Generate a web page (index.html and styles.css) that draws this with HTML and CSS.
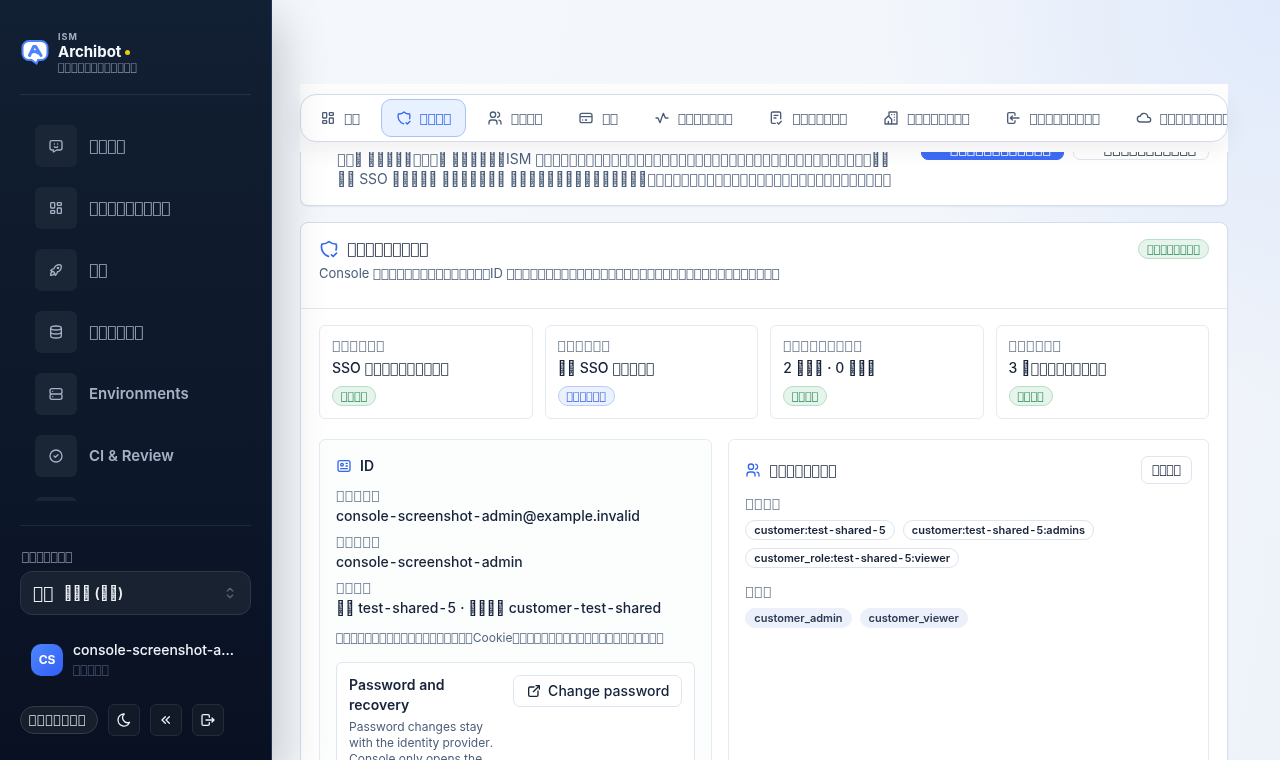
FILE: index.html
```html
<!DOCTYPE html>
<html lang="ja">
<head>
<meta charset="utf-8">
<title>ISM Archibot</title>
<link rel="stylesheet" href="styles.css">
</head>
<body>
<svg class="sprite" aria-hidden="true">
<symbol id="chat" viewBox="0 0 24 24"><path d="M18 4a3 3 0 0 1 3 3v8a3 3 0 0 1-3 3h-5l-5 3v-3H6a3 3 0 0 1-3-3V7a3 3 0 0 1 3-3zM9.500 9h.01M14.500 9h.01M9.500 13a3.500 3.500 0 0 0 5 0"/></symbol>
<symbol id="dash" viewBox="0 0 24 24"><path d="M5 4h4a1 1 0 0 1 1 1v6a1 1 0 0 1-1 1H5a1 1 0 0 1-1-1V5a1 1 0 0 1 1-1M5 16h4a1 1 0 0 1 1 1v2a1 1 0 0 1-1 1H5a1 1 0 0 1-1-1v-2a1 1 0 0 1 1-1M15 12h4a1 1 0 0 1 1 1v6a1 1 0 0 1-1 1h-4a1 1 0 0 1-1-1v-6a1 1 0 0 1 1-1M15 4h4a1 1 0 0 1 1 1v2a1 1 0 0 1-1 1h-4a1 1 0 0 1-1-1V5a1 1 0 0 1 1-1"/></symbol>
<symbol id="rocket" viewBox="0 0 24 24"><path d="M4 13a8 8 0 0 1 7 7a6 6 0 0 0 3-5a9 9 0 0 0 6-8a3 3 0 0 0-3-3a9 9 0 0 0-8 6a6 6 0 0 0-5 3M7 14a6 6 0 0 0-3 6a6 6 0 0 0 6-3M14 9a1 1 0 1 0 2 0a1 1 0 1 0-2 0"/></symbol>
<symbol id="db" viewBox="0 0 24 24"><path d="M4 6a8 3 0 1 0 16 0a8 3 0 1 0-16 0M4 6v6a8 3 0 0 0 16 0V6M4 12v6a8 3 0 0 0 16 0v-6"/></symbol>
<symbol id="server" viewBox="0 0 24 24"><path d="M3 7a3 3 0 0 1 3-3h12a3 3 0 0 1 3 3v2a3 3 0 0 1-3 3H6a3 3 0 0 1-3-3zM3 15a3 3 0 0 1 3-3h12a3 3 0 0 1 3 3v2a3 3 0 0 1-3 3H6a3 3 0 0 1-3-3zM7 8v.01M7 16v.01"/></symbol>
<symbol id="check" viewBox="0 0 24 24"><path d="M3 12a9 9 0 1 0 18 0a9 9 0 1 0-18 0M9 12l2 2l4-4"/></symbol>
<symbol id="shield" viewBox="0 0 24 24"><path d="M11.460 20.846A12 12 0 0 1 3.500 6A12 12 0 0 0 12 3a12 12 0 0 0 8.500 3a12 12 0 0 1-.09 7.060M15 19l2 2l4-4"/></symbol>
<symbol id="users" viewBox="0 0 24 24"><path d="M5 7a4 4 0 1 0 8 0a4 4 0 1 0-8 0M3 21v-2a4 4 0 0 1 4-4h4a4 4 0 0 1 4 4v2M16 3.130a4 4 0 0 1 0 7.750M21 21v-2a4 4 0 0 0-3-3.850"/></symbol>
<symbol id="card" viewBox="0 0 24 24"><path d="M3 8a3 3 0 0 1 3-3h12a3 3 0 0 1 3 3v8a3 3 0 0 1-3 3H6a3 3 0 0 1-3-3zM3 10h18M7 15h.01M11 15h2"/></symbol>
<symbol id="pulse" viewBox="0 0 24 24"><path d="M3 12h3l3 7l5-14l3 7h4"/></symbol>
<symbol id="note" viewBox="0 0 24 24"><path d="M11 20H7a2 2 0 0 1-2-2V5a2 2 0 0 1 2-2h10a2 2 0 0 1 2 2v8M9 8h6M9 12h3M14 19l2 2l4-4"/></symbol>
<symbol id="estate" viewBox="0 0 24 24"><path d="M8 9l5 5v7H8v-4v4H3v-7l5-5M9 10V4a1 1 0 0 1 1-1h10a1 1 0 0 1 1 1v17h-8M13 7v.01M17 7v.01M17 11v.01M17 15v.01"/></symbol>
<symbol id="enter" viewBox="0 0 24 24"><path d="M15 8V6a2 2 0 0 0-2-2H6a2 2 0 0 0-2 2v12a2 2 0 0 0 2 2h7a2 2 0 0 0 2-2v-2M21 12H8l3-3M11 15l-3-3"/></symbol>
<symbol id="cloud" viewBox="0 0 24 24"><path d="M6.657 18C4.085 18 2 15.993 2 13.517s2.085-4.482 4.657-4.482c.393-1.762 1.794-3.200 3.675-3.773c1.880-.572 3.956-.193 5.444 1c1.488 1.190 2.162 3.007 1.770 4.769h.990c1.913 0 3.464 1.560 3.464 3.486S20.449 18 18.535 18z"/></symbol>
<symbol id="id" viewBox="0 0 24 24"><path d="M3 7a3 3 0 0 1 3-3h12a3 3 0 0 1 3 3v10a3 3 0 0 1-3 3H6a3 3 0 0 1-3-3zM7 10a2 2 0 1 0 4 0a2 2 0 1 0-4 0M15 8h2M15 12h2M7 16h10"/></symbol>
<symbol id="ext" viewBox="0 0 24 24"><path d="M12 6H6a2 2 0 0 0-2 2v10a2 2 0 0 0 2 2h10a2 2 0 0 0 2-2v-6M11 13l9-9M15 4h5v5"/></symbol>
<symbol id="moon" viewBox="0 0 24 24"><path d="M12 3h.393a7.500 7.500 0 0 0 7.920 12.446A9 9 0 1 1 12 2.992z"/></symbol>
<symbol id="back" viewBox="0 0 24 24"><path d="M11 7l-5 5l5 5M17 7l-5 5l5 5"/></symbol>
<symbol id="exit" viewBox="0 0 24 24"><path d="M14 8V6a2 2 0 0 0-2-2H5a2 2 0 0 0-2 2v12a2 2 0 0 0 2 2h7a2 2 0 0 0 2-2v-2M9 12h12l-3-3M18 15l3-3"/></symbol>
<symbol id="updown" viewBox="0 0 24 24"><path d="M8 9l4-4l4 4M16 15l-4 4l-4-4"/></symbol>
</svg>

<div class="app">
<aside class="sidebar">
  <div class="brand">
    <svg class="logo" viewBox="0 0 28 28"><path d="M8 2h12a6.500 6.500 0 0 1 6.500 6.500v6A6.500 6.500 0 0 1 20 21h-3l-1.500 3.500l-5-3.500H8a6.500 6.500 0 0 1-6.500-6.500v-6A6.500 6.500 0 0 1 8 2z" fill="#fff" stroke="#4d83fb" stroke-width="2"/><path d="M8.500 16.500L12.700 7.500h2l5.300 9M11 13.200q4-1.500 6 .8" fill="none" stroke="#4d83fb" stroke-width="3" stroke-linecap="round" stroke-linejoin="round"/></svg>
    <div class="brand-text">
      <span class="brand-org">ISM</span>
      <strong class="brand-name">Archibot<span class="dot"></span></strong>
      <span class="brand-sub"><span class="box" data-n="12"></span></span>
    </div>
  </div>
  <nav class="menu">
    <a href="#"><span class="tile"><svg class="icon"><use href="#chat"/></svg></span><span class="box" data-n="4"></span></a>
    <a href="#"><span class="tile"><svg class="icon"><use href="#dash"/></svg></span><span class="box" data-n="9"></span></a>
    <a href="#"><span class="tile"><svg class="icon"><use href="#rocket"/></svg></span><span class="box" data-n="2"></span></a>
    <a href="#"><span class="tile"><svg class="icon"><use href="#db"/></svg></span><span class="box" data-n="6"></span></a>
    <a href="#"><span class="tile"><svg class="icon"><use href="#server"/></svg></span>Environments</a>
    <a href="#"><span class="tile"><svg class="icon"><use href="#check"/></svg></span>CI &amp; Review</a>
    <a href="#"><span class="tile"></span></a>
  </nav>
  <div class="foot">
    <div class="locale">
      <span class="locale-label" id="locale-label"><span class="box" data-n="7"></span></span>
      <button class="locale-select" aria-labelledby="locale-label"><span class="flag box" data-n="2"></span><span class="locale-name"><span class="hex" data-n="3"></span> (<span class="hex" data-n="2"></span>)</span><svg class="icon"><use href="#updown"/></svg></button>
    </div>
    <div class="user">
      <span class="avatar">CS</span>
      <div class="user-text"><span class="user-name">console-screenshot-a…</span><span class="user-role"><span class="box" data-n="5"></span></span></div>
    </div>
    <div class="tools">
      <span class="status"><span class="box" data-n="7"></span></span>
      <button class="tool" aria-label="Theme"><svg class="icon"><use href="#moon"/></svg></button>
      <button class="tool" aria-label="Collapse"><svg class="icon"><use href="#back"/></svg></button>
      <button class="tool" aria-label="Log out"><svg class="icon"><use href="#exit"/></svg></button>
    </div>
  </div>
</aside>

<main class="main">
  <div class="tabs-wrap">
    <nav class="tabs">
      <button class="tab"><svg class="icon"><use href="#dash"/></svg><span class="box" data-n="2"></span></button>
      <button class="tab active"><svg class="icon"><use href="#shield"/></svg><span class="box" data-n="4"></span></button>
      <button class="tab"><svg class="icon"><use href="#users"/></svg><span class="box" data-n="4"></span></button>
      <button class="tab"><svg class="icon"><use href="#card"/></svg><span class="box" data-n="2"></span></button>
      <button class="tab"><svg class="icon"><use href="#pulse"/></svg><span class="box" data-n="7"></span></button>
      <button class="tab"><svg class="icon"><use href="#note"/></svg><span class="box" data-n="7"></span></button>
      <button class="tab"><svg class="icon"><use href="#estate"/></svg><span class="box" data-n="8"></span></button>
      <button class="tab"><svg class="icon"><use href="#enter"/></svg><span class="box" data-n="9"></span></button>
      <button class="tab"><svg class="icon"><use href="#cloud"/></svg><span class="box" data-n="10"></span></button>
    </nav>
  </div>
  <div class="hero-clip">
    <section class="card hero">
      <p class="hero-text"><span class="box" data-n="2"></span><span class="hex" data-n="1"></span> <span class="hex" data-n="5"></span><span class="box" data-n="3"></span><span class="hex" data-n="1"></span> <span class="hex" data-n="6"></span>ISM <span class="box" data-n="40"></span><span class="hex" data-n="2"></span><br><span class="hex" data-n="2"></span> SSO <span class="hex" data-n="5"></span> <span class="hex" data-n="7"></span> <span class="hex" data-n="15"></span><span class="box" data-n="29"></span></p>
      <div class="hero-actions">
        <button class="btn primary"><span class="box" data-n="12"></span></button>
        <button class="btn secondary"><span class="box" data-n="11"></span></button>
      </div>
    </section>
  </div>

  <section class="card account">
    <header class="account-head">
      <div>
        <h2 class="title"><svg class="icon"><use href="#shield"/></svg><span class="box" data-n="9"></span></h2>
        <p class="sub">Console <span class="box" data-n="15"></span>ID <span class="box" data-n="35"></span></p>
      </div>
      <span class="badge"><span class="box" data-n="8"></span></span>
    </header>
    <div class="account-body">
      <div class="stats">
        <div class="stat"><span class="label"><span class="box" data-n="6"></span></span><span class="value">SSO <span class="box" data-n="10"></span></span><span class="badge"><span class="box" data-n="4"></span></span></div>
        <div class="stat"><span class="label"><span class="box" data-n="6"></span></span><span class="value"><span class="hex" data-n="2"></span> SSO <span class="box" data-n="5"></span></span><span class="badge info"><span class="box" data-n="6"></span></span></div>
        <div class="stat"><span class="label"><span class="box" data-n="9"></span></span><span class="value">2 <span class="hex" data-n="3"></span> · 0 <span class="hex" data-n="3"></span></span><span class="badge"><span class="box" data-n="4"></span></span></div>
        <div class="stat"><span class="label"><span class="box" data-n="6"></span></span><span class="value">3 <span class="hex" data-n="1"></span><span class="box" data-n="9"></span></span><span class="badge"><span class="box" data-n="4"></span></span></div>
      </div>
      <div class="panels">
        <section class="panel identity">
          <h3 class="panel-title"><svg class="icon"><use href="#id"/></svg>ID</h3>
          <dl class="fields">
            <div><dt class="label"><span class="box" data-n="5"></span></dt><dd class="value">console-screenshot-admin@example.invalid</dd></div>
            <div><dt class="label"><span class="box" data-n="5"></span></dt><dd class="value">console-screenshot-admin</dd></div>
            <div><dt class="label"><span class="box" data-n="4"></span></dt><dd class="value"><span class="hex" data-n="2"></span> test-shared-5 · <span class="hex" data-n="4"></span> customer-test-shared</dd></div>
          </dl>
          <p class="note"><span class="box" data-n="19"></span>Cookie<span class="box" data-n="21"></span></p>
          <div class="recovery">
            <div class="recovery-text"><h4>Password and recovery</h4><p>Password changes stay with the identity provider. Console only opens the</p></div>
            <button class="btn"><svg class="icon"><use href="#ext"/></svg>Change password</button>
          </div>
        </section>
        <section class="panel groups">
          <div class="panel-head">
            <h3 class="panel-title"><svg class="icon"><use href="#users"/></svg><span class="box" data-n="8"></span></h3>
            <button class="btn small"><span class="box" data-n="4"></span></button>
          </div>
          <div class="group"><span class="label"><span class="box" data-n="4"></span></span><div class="chips"><span class="chip">customer:test-shared-5</span><span class="chip">customer:test-shared-5:admins</span><span class="chip">customer_role:test-shared-5:viewer</span></div></div>
          <div class="group"><span class="label"><span class="box" data-n="3"></span></span><div class="chips"><span class="chip soft">customer_admin</span><span class="chip soft">customer_viewer</span></div></div>
        </section>
      </div>
    </div>
  </section>
</main>
</div>
<script src="boxes.js"></script>
</body>
</html>
```
FILE: styles.css
```css
* { box-sizing: border-box; }
body { margin: 0; font: 14px/20px Inter, sans-serif; color: #16233a; }
h2, h3, h4, p, dl, dd { margin: 0; }
button { font: inherit; color: inherit; cursor: pointer; }
.sprite { position: absolute; width: 0; height: 0; }
.icon { width: 16px; height: 16px; flex: none; fill: none; stroke: currentColor; stroke-width: 2; stroke-linecap: round; stroke-linejoin: round; }
.box { font-family: "DejaVu Sans", sans-serif; font-weight: 400; white-space: nowrap; line-height: 1; }

.app { display: flex; height: 100vh; overflow: hidden; will-change: transform; }

.sidebar { position: relative; z-index: 5; flex: none; width: 272px; display: flex; flex-direction: column; padding: 30px 20px 24px; color: #a5b1c6; background: linear-gradient(180deg, #122033 0%, #0f1b2d 30%, #0c1729 65%, #091022 100%); border-right: 1px solid #1e3557; box-shadow: 4px 20px 48px rgba(10, 14, 22, .24); }
.brand { display: flex; align-items: center; gap: 9px; padding-bottom: 18px; border-bottom: 1px solid #243143; }
.logo { width: 28px; height: 28px; margin-left: 1px; }
.brand-text { display: flex; flex-direction: column; }
.brand-org { font-size: 9px; line-height: 14px; font-weight: 700; letter-spacing: 1px; color: #a3afc2; }
.brand-name { display: flex; align-items: center; gap: 4px; font-size: 15px; line-height: 16px; color: #f5f8fd; }
.dot { width: 5px; height: 5px; border-radius: 50%; background: #eacb16; }
.brand-sub { font-size: 11px; line-height: 14px; padding-bottom: 2px; color: #8290a4; }

.menu { flex: 1; min-height: 0; overflow: hidden; display: flex; flex-direction: column; gap: 20px; padding: 30px 15px 0; }
.menu a { display: flex; align-items: center; gap: 12px; color: inherit; text-decoration: none; font-size: 15px; font-weight: 600; }
.tile { flex: none; width: 42px; height: 42px; display: grid; place-items: center; border-radius: 6px; background: #1a2536; }

.foot { margin-top: 24px; border-top: 1px solid #1e2a3b; padding-top: 21px; display: flex; flex-direction: column; }
.locale { display: flex; flex-direction: column; gap: 4px; }
.locale-label { padding-left: 2px; font-size: 12px; color: #8a96a8; }
.locale-select { display: flex; align-items: center; height: 44px; padding: 0 12px; gap: 10px; background: #192231; border: 1px solid #2c3645; border-radius: 12px; color: #eef2f8; font-weight: 600; text-align: left; }
.flag { font-size: 17px; }
.locale-name { flex: 1; }
.locale-select .icon { color: #56657c; }
.user { display: flex; align-items: center; gap: 10px; padding: 25px 11px 24px; }
.avatar { flex: none; width: 32px; height: 32px; border-radius: 10px; display: grid; place-items: center; background: linear-gradient(135deg, #4f86ff, #2f5ff5); color: #fff; font-size: 12px; font-weight: 700; }
.user-text { display: flex; flex-direction: column; }
.user-name { white-space: nowrap; font-weight: 500; color: #f0f4fa; }
.user-role { font-size: 12px; color: #46566f; }
.tools { display: flex; align-items: center; gap: 10px; }
.status { height: 28px; padding: 0 11px 0 8px; display: flex; align-items: center; border: 1px solid #323c4a; border-radius: 14px; background: #171f2d; color: #dde4ee; font-size: 12px; letter-spacing: 1px; }
.tool { width: 32px; height: 32px; padding: 0; display: grid; place-items: center; border: 1px solid #222c3a; border-radius: 6px; background: #121a28; color: #edf1f8; }

.main { flex: 1; min-width: 0; padding: 84px 52px 0 28px; font-variant-numeric: tabular-nums; background: radial-gradient(circle at 100% 0, #e0eafb 0, rgba(224, 234, 251, 0) 400px), linear-gradient(100deg, #f4f7fb 0%, #f3f6fb 60%, #eef2f9 100%); }
.tabs-wrap { position: relative; z-index: 2; padding: 10px 0; background: #fefefe; }
.tabs { display: flex; gap: 6px; padding: 4px; overflow: hidden; background: #fff; border: 1px solid #d3dbea; border-radius: 16px; box-shadow: 0 8px 24px rgba(15, 23, 42, .06); }
.tab { flex: none; display: flex; align-items: center; gap: 8px; height: 38px; padding: 0 14px; border: 1px solid transparent; border-radius: 10px; background: none; color: #4b5c78; font-size: 13px; }
.tab.active { background: #e7f1ff; border-color: #a9c2f5; color: #3566f0; }

.card { background: #fff; border: 1px solid #d5deec; border-radius: 8px; box-shadow: 0 1px 2px rgba(15, 23, 42, .06); }
.hero-clip { overflow: hidden; padding-bottom: 2px; }
.hero { display: flex; justify-content: space-between; height: 94px; margin-top: -40px; padding: 15px 18px 16px 36px; }
.hero-text { align-self: flex-end; color: #4d5f7b; white-space: nowrap; }
.hero-actions { display: flex; align-items: flex-start; gap: 9px; }
.btn { flex: none; display: flex; align-items: center; justify-content: center; gap: 6px; height: 32px; padding: 0 12px; border: 1px solid #dde5f1; border-radius: 7px; background: #fff; font-weight: 500; }
.btn.primary, .btn.secondary { align-items: flex-start; padding: 0 12px 0 30px; }
.btn.primary { padding-left: 28px; border-color: #3d6cf5; background: #3d6cf5; color: #fff; }
.btn.small { height: 28px; padding: 0 10px; font-size: 12px; }

.account { margin-top: 14px; }
.account-head { display: flex; justify-content: space-between; align-items: flex-start; padding: 16px 18px 25px; border-bottom: 1px solid #e2e8f2; }
.title { display: flex; align-items: center; gap: 8px; font-size: 15px; line-height: 24px; }
.title .icon { width: 20px; height: 20px; color: #3566f0; }
.sub { margin-top: 4px; font-size: 13px; color: #4d5f7b; }
.badge { flex: none; display: inline-flex; align-items: center; height: 20px; padding: 0 8px; border: 1px solid #b4dfc6; border-radius: 10px; background: #e6f4ec; color: #2b8a58; font-size: 11px; }
.badge.info { border-color: #b9ccfb; background: #ebf1ff; color: #3864dc; }

.account-body { padding: 16px 18px; display: flex; flex-direction: column; gap: 20px; }
.stats { display: grid; grid-template-columns: repeat(4, 1fr); gap: 12px; }
.stat { display: flex; flex-direction: column; align-items: flex-start; padding: 12px; border: 1px solid #e5eaf4; border-radius: 6px; }
.label { display: block; margin-bottom: 4px; font-size: 13px; line-height: 14px; letter-spacing: 1px; color: #65748c; }
.stat .label { margin-bottom: 6px; }
.stat .value { margin-bottom: 8px; }
.value { font-weight: 500; }

.panels { display: grid; grid-template-columns: 9fr 11fr; gap: 16px; }
.panel { padding: 16px; border: 1px solid #e5eaf4; border-radius: 6px; min-height: 360px; }
.identity { background: #fcfefd; }
.panel-title { display: flex; align-items: center; gap: 8px; font-size: 14px; font-weight: 600; }
.panel-title .icon { color: #3566f0; }
.fields { display: flex; flex-direction: column; gap: 8px; margin-top: 12px; }
.note { margin-top: 10px; font-size: 12px; color: #55667f; white-space: nowrap; }
.recovery { display: flex; align-items: flex-start; gap: 16px; margin-top: 14px; padding: 12px; border: 1px solid #dfe6f1; border-radius: 6px; background: #fff; }
.recovery-text { flex: 1; min-width: 0; }
.recovery h4 { font-size: 14px; font-weight: 600; }
.recovery p { margin-top: 4px; font-size: 12px; line-height: 16px; color: #4d5f7b; }
.panel-head { display: flex; justify-content: space-between; align-items: center; }
.group { margin-top: 12px; }
.group + .group { margin-top: 16px; }
.chips { display: flex; flex-wrap: wrap; gap: 8px; margin-top: 10px; max-width: 380px; }
.chip { height: 20px; padding: 0 8px; border: 1px solid #dbe4f0; border-radius: 10px; background: #fff; font-size: 11px; line-height: 18px; font-weight: 600; }
.chip.soft { border-color: #ebf0fa; background: #ebf0fa; color: #2b3a54; }
.btn.primary .box, .btn.secondary .box { padding-top: 12px; }
```
FILE: boxes.js
```js
// Fills each placeholder run with its number of glyph boxes.
document.querySelectorAll('[data-n]').forEach(function (el) {
  el.textContent = '\uE0F0'.repeat(Number(el.dataset.n));
});
```
